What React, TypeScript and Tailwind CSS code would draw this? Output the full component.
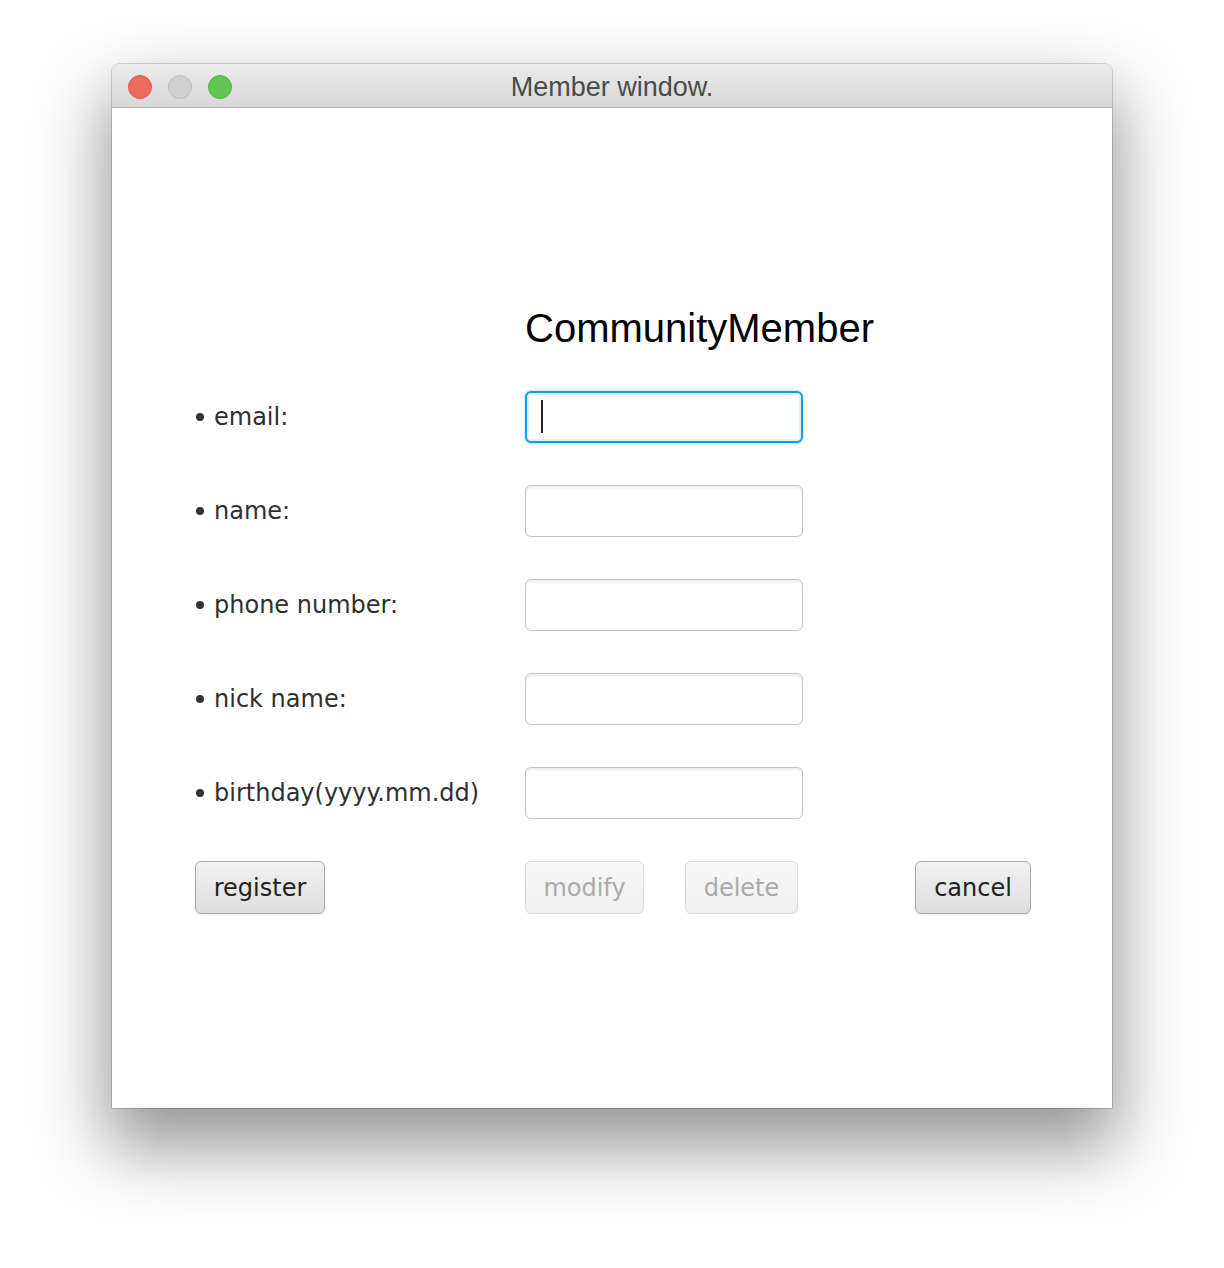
import React from 'react';

const labelFont = { fontFamily: '"DejaVu Sans", "Liberation Sans", sans-serif' };

const fields = ['email:', 'name:', 'phone number:', 'nick name:', 'birthday(yyyy.mm.dd)'];

const TrafficLights = () => (
  <div className="flex items-center gap-4">
    <span className="w-6 h-6 rounded-full bg-[#ed6a5e] border border-[#d5594d]" />
    <span className="w-6 h-6 rounded-full bg-[#d0d0d0] border border-[#bdbdbd]" />
    <span className="w-6 h-6 rounded-full bg-[#62c554] border border-[#53ab45]" />
  </div>
);

const Field = ({ focused }: { focused?: boolean }) =>
  focused ? (
    <div className="relative w-[278px] h-[52px] rounded-[6px] bg-white border-2 border-[#0ea0db] shadow-[0_0_0_1.5px_#d6eef8,inset_0_0_0_2px_#dff1fa]">
      {/* text caret */}
      <span className="absolute left-[14px] top-[7px] w-[2px] h-[33px] bg-[#222]" />
    </div>
  ) : (
    <div className="w-[278px] h-[52px] rounded-[6px] bg-white border border-[#c4c4c4] shadow-[inset_0_3px_3px_-1px_rgba(0,0,0,0.07)]" />
  );

const Button = ({ label, width, disabled }: { label: string; width: string; disabled?: boolean }) => (
  <button
    style={labelFont}
    className={
      disabled
        ? `${width} h-[53px] rounded-[6px] border border-[#dadada] bg-gradient-to-b from-[#f8f8f8] to-[#efefef] text-[24px] text-[#aaaaaa]`
        : `${width} h-[53px] rounded-[6px] border border-[#a9a9a9] bg-gradient-to-b from-[#f2f2f2] to-[#dedede] text-[24px] text-[#222] shadow-[0_1px_0_rgba(0,0,0,0.06)]`
    }
  >
    {label}
  </button>
);

export default function App() {
  return (
    <div className="min-h-[1268px] bg-white pt-[64px]">
      <div className="mx-auto w-[1000px] h-[1044px] rounded-t-[8px] bg-white shadow-[0_0_0_1px_rgba(0,0,0,0.16),0_34px_70px_6px_rgba(0,0,0,0.42)] flex flex-col overflow-hidden">
        {/* title bar */}
        <div className="relative h-[44px] shrink-0 flex items-center px-[16px] pt-[2px] bg-gradient-to-b from-[#ececec] to-[#d6d6d6] border-b border-[#b5b5b5]">
          <TrafficLights />
          <div
            className="absolute inset-0 flex items-center justify-center pt-[4px] text-[27px] text-[#4b4b4b]"
            style={{ fontFamily: '"Liberation Sans", Arial, sans-serif' }}
          >
            Member window.
          </div>
        </div>

        {/* content */}
        <div className="flex-1 pl-[83px] pr-[81px] pt-[197px]">
          <div className="pl-[330px]">
            <h1
              className="text-[40px] leading-[46px] text-black"
              style={{ fontFamily: '"Liberation Sans", Arial, sans-serif' }}
            >
              CommunityMember
            </h1>
          </div>

          <div className="mt-[40px] flex flex-col gap-[42px]">
            {fields.map((f, i) => (
              <div key={f} className="grid grid-cols-[330px_278px] items-center">
                <div className="flex items-center gap-[10px] pl-[1px] text-[24px] text-[#2f2f2f]" style={labelFont}>
                  <span className="w-[8px] h-[8px] rounded-full bg-[#333]" />
                  <span>{f}</span>
                </div>
                <Field focused={i === 0} />
              </div>
            ))}

            <div className="flex items-center">
              <div className="w-[330px]">
                <Button label="register" width="w-[130px]" />
              </div>
              <div className="flex items-center gap-[41px]">
                <Button label="modify" width="w-[119px]" disabled />
                <Button label="delete" width="w-[113px]" disabled />
              </div>
              <div className="flex-1 flex justify-end">
                <Button label="cancel" width="w-[116px]" />
              </div>
            </div>
          </div>
        </div>
      </div>
    </div>
  );
}
